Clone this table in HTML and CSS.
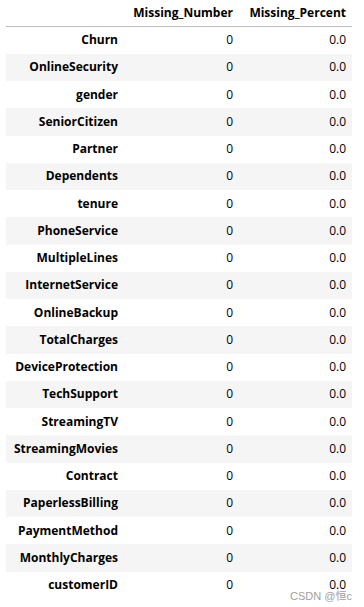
FILE: index.html
```html
<!DOCTYPE html>
<html>
<head>
    <title>missing values</title>
    <meta name="viewport" content="width=device-width, initial-scale=1.0">
    <link rel="stylesheet" href="styles.css">
</head>
<body>
    <div class="output">
        <table class="dataframe">
            <colgroup>
                <col class="col-index">
                <col class="col-number">
                <col class="col-percent">
            </colgroup>
            <thead>
                <tr>
                    <th></th>
                    <th>Missing_Number</th>
                    <th>Missing_Percent</th>
                </tr>
            </thead>
            <tbody>
                <tr><th>Churn</th><td>0</td><td>0.0</td></tr>
                <tr><th>OnlineSecurity</th><td>0</td><td>0.0</td></tr>
                <tr><th>gender</th><td>0</td><td>0.0</td></tr>
                <tr><th>SeniorCitizen</th><td>0</td><td>0.0</td></tr>
                <tr><th>Partner</th><td>0</td><td>0.0</td></tr>
                <tr><th>Dependents</th><td>0</td><td>0.0</td></tr>
                <tr><th>tenure</th><td>0</td><td>0.0</td></tr>
                <tr><th>PhoneService</th><td>0</td><td>0.0</td></tr>
                <tr><th>MultipleLines</th><td>0</td><td>0.0</td></tr>
                <tr><th>InternetService</th><td>0</td><td>0.0</td></tr>
                <tr><th>OnlineBackup</th><td>0</td><td>0.0</td></tr>
                <tr><th>TotalCharges</th><td>0</td><td>0.0</td></tr>
                <tr><th>DeviceProtection</th><td>0</td><td>0.0</td></tr>
                <tr><th>TechSupport</th><td>0</td><td>0.0</td></tr>
                <tr><th>StreamingTV</th><td>0</td><td>0.0</td></tr>
                <tr><th>StreamingMovies</th><td>0</td><td>0.0</td></tr>
                <tr><th>Contract</th><td>0</td><td>0.0</td></tr>
                <tr><th>PaperlessBilling</th><td>0</td><td>0.0</td></tr>
                <tr><th>PaymentMethod</th><td>0</td><td>0.0</td></tr>
                <tr><th>MonthlyCharges</th><td>0</td><td>0.0</td></tr>
                <tr><th>customerID</th><td>0</td><td>0.0</td></tr>
            </tbody>
        </table>
        <div class="mark">CSDN @恒c</div>
    </div>
</body>
</html>
```

FILE: styles.css
```css
/* notebook output area */
body {
    margin: 0;
    background: #fff;
    font-family: "Open Sans", "Noto Sans CJK SC", sans-serif;
    color: #000;
}
.output {
    position: relative;
    padding: 0 0 0 6px;
    height: 607px;
}

/* dataframe table */
.dataframe {
    border-collapse: collapse;
    border-spacing: 0;
    table-layout: fixed;
    width: 346px;
    font-size: 12px;
}
.col-index { width: 119px; }
.col-number { width: 115px; }
.col-percent { width: 112px; }

.dataframe th,
.dataframe td {
    text-align: right;
    padding: 0 7px 0 6px;
    white-space: nowrap;
    line-height: 16px;
}
.dataframe th:last-child,
.dataframe td:last-child {
    padding-right: 6px;
}
.dataframe thead th {
    height: 26px;
    vertical-align: middle;
    font-weight: bold;
    border-bottom: 1px solid #bdbdbd;
}
.dataframe tbody th {
    font-weight: bold;
}
.dataframe tbody tr {
    height: 27.25px;
}
.dataframe tbody tr:nth-child(even) {
    background: #f5f5f5;
}

/* blog watermark */
.mark {
    position: absolute;
    left: 290px;
    top: 587px;
    font-family: "Liberation Sans", "Noto Sans CJK SC", sans-serif;
    font-size: 11px;
    color: #a0a0a0;
}
```
